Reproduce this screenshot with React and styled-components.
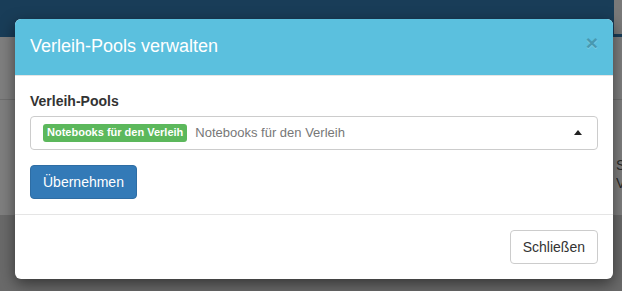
import React from "react";
import styled, { createGlobalStyle } from "styled-components";

const GlobalStyle = createGlobalStyle`
  html, body {
    margin: 0;
    padding: 0;
    width: 622px;
    height: 291px;
    overflow: hidden;
    font-family: "Liberation Sans", Arial, sans-serif;
    font-size: 14px;
    color: #333;
  }
  * { box-sizing: border-box; }
`;

const Page = styled.div`
  position: relative;
  width: 622px;
  height: 291px;
  display: flex;
  flex-direction: column;
  background: #d4d4d4;
`;

const Navbar = styled.div`
  height: 37px;
  display: flex;
  background: #337ab0;
`;

const NavFill = styled.div`
  flex: 1;
`;

const Scrollbar = styled.div`
  width: 8px;
  height: 34px;
  background: #f2f2f2;
`;

const Content = styled.div`
  height: 178px;
  background: #fff;
  display: flex;
  flex-direction: column;
`;

const Toolbar = styled.div`
  height: 63px;
  border-bottom: 1px solid #dedede;
`;

const Row = styled.div`
  flex: 1;
  display: flex;
  justify-content: flex-end;
  padding-top: 56px;
`;

const CutText = styled.div`
  width: 6px;
  overflow: hidden;
  font-size: 14px;
  line-height: 18px;
  color: #555;
  white-space: nowrap;
`;

const Backdrop = styled.div`
  position: absolute;
  inset: 0;
  background: rgba(0, 0, 0, 0.5);
`;

const Modal = styled.div`
  position: absolute;
  top: 19px;
  left: 15px;
  width: 598px;
  background: #fff;
  border-radius: 6px;
  box-shadow: 0 5px 15px rgba(0, 0, 0, 0.5);
  overflow: hidden;
`;

const Header = styled.div`
  background: #5bc0de;
  padding: 15px;
  border-bottom: 1px solid #e5e5e5;
  display: flex;
  align-items: flex-start;
  justify-content: space-between;
`;

const Title = styled.h4`
  margin: 0;
  font-size: 18px;
  font-weight: 500;
  line-height: 25.7px;
  color: #fff;
`;

const Close = styled.button`
  border: 0;
  background: transparent;
  padding: 0;
  margin-top: -2px;
  font-family: "Liberation Sans", Arial, sans-serif;
  font-size: 21px;
  font-weight: bold;
  line-height: 1;
  color: #000;
  opacity: 0.2;
  text-shadow: 0 1px 0 #fff;
`;

const Body = styled.div`
  padding: 15px;
`;

const Label = styled.label`
  display: block;
  font-weight: bold;
  line-height: 20px;
  margin-bottom: 5px;
`;

const Select = styled.div`
  height: 34px;
  border: 1px solid #ccc;
  border-radius: 4px;
  display: flex;
  align-items: center;
  padding: 0 15px 0 12px;
  margin-bottom: 15px;
`;

const Tag = styled.span`
  background: #5cb85c;
  color: #fff;
  font-size: 11px;
  font-weight: bold;
  line-height: 1;
  padding: 3px 4px 4px;
  border-radius: 3px;
  margin-right: 8px;
`;

const Placeholder = styled.span`
  flex: 1;
  color: #777;
  font-size: 13px;
`;

const Arrow = styled.span`
  width: 0;
  height: 0;
  border-left: 4px solid transparent;
  border-right: 4px solid transparent;
  border-bottom: 5px solid #222;
  margin-top: -1px;
`;

const Button = styled.button`
  height: 34px;
  padding: 6px 12px;
  font-family: "Liberation Sans", Arial, sans-serif;
  font-size: 14px;
  line-height: 20px;
  border-radius: 4px;
  border: 1px solid ${(p) => (p.$primary ? "#2e6da4" : "#ccc")};
  background: ${(p) => (p.$primary ? "#337ab7" : "#fff")};
  color: ${(p) => (p.$primary ? "#fff" : "#333")};
`;

const Footer = styled.div`
  padding: 15px;
  border-top: 1px solid #e5e5e5;
  display: flex;
  justify-content: flex-end;
`;

export default function App() {
  return (
    <>
      <GlobalStyle />
      <Page>
        <Navbar>
          <NavFill />
          <Scrollbar />
        </Navbar>
        <Content>
          <Toolbar />
          <Row>
            <CutText>
              Status
              <br />
              Verleih
            </CutText>
          </Row>
        </Content>
        <Backdrop />
        <Modal>
          <Header>
            <Title>Verleih-Pools verwalten</Title>
            <Close>×</Close>
          </Header>
          <Body>
            <Label>Verleih-Pools</Label>
            <Select>
              <Tag>Notebooks für den Verleih</Tag>
              <Placeholder>Notebooks für den Verleih</Placeholder>
              <Arrow />
            </Select>
            <Button $primary>Übernehmen</Button>
          </Body>
          <Footer>
            <Button>Schließen</Button>
          </Footer>
        </Modal>
      </Page>
    </>
  );
}
